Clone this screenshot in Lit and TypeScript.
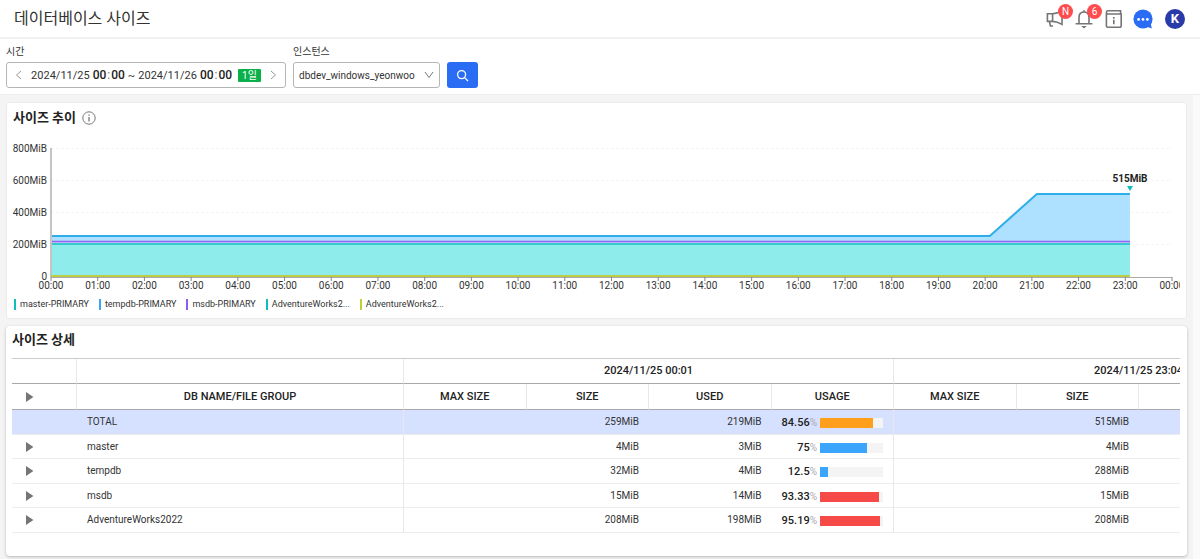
import { LitElement, html, svg, css, nothing } from "lit";
import { customElement, property } from "lit/decorators.js";
import { styleMap } from "lit/directives/style-map.js";
import { classMap } from "lit/directives/class-map.js";

interface Series {
  name: string;
  color: string;
}

interface Row {
  name: string;
  total?: boolean;
  size: string;
  used: string;
  usage: number;
  level: "ok" | "warn" | "critical";
  nextSize: string;
}

const SERIES: Series[] = [
  { name: "master-PRIMARY", color: "#12bdb9" },
  { name: "tempdb-PRIMARY", color: "#3ba5fd" },
  { name: "msdb-PRIMARY", color: "#8c5cf0" },
  { name: "AdventureWorks2...", color: "#12bdb9" },
  { name: "AdventureWorks2...", color: "#bfd034" },
];

const ROWS: Row[] = [
  { name: "TOTAL", total: true, size: "259MiB", used: "219MiB", usage: 84.56, level: "warn", nextSize: "515MiB" },
  { name: "master", size: "4MiB", used: "3MiB", usage: 75, level: "ok", nextSize: "4MiB" },
  { name: "tempdb", size: "32MiB", used: "4MiB", usage: 12.5, level: "ok", nextSize: "288MiB" },
  { name: "msdb", size: "15MiB", used: "14MiB", usage: 93.33, level: "critical", nextSize: "15MiB" },
  { name: "AdventureWorks2022", size: "208MiB", used: "198MiB", usage: 95.19, level: "critical", nextSize: "208MiB" },
];

const base = css`
  * {
    box-sizing: border-box;
  }
  button {
    display: flex;
    align-items: center;
    justify-content: center;
    margin: 0;
    padding: 0;
    border: 0;
    background: none;
    color: inherit;
    font: inherit;
    cursor: pointer;
  }
  svg {
    display: block;
    flex: none;
  }
  h1,
  h2 {
    margin: 0;
  }
`;

@customElement("top-bar")
export class TopBar extends LitElement {
  static styles = [
    base,
    css`
      :host {
        display: flex;
        align-items: center;
        justify-content: space-between;
        height: 39px;
        padding: 0 15px 0 14px;
        border-bottom: 2px solid #f1f1f1;
        background: #fff;
      }
      h1 {
        font-size: 16px;
        font-weight: 400;
        line-height: 36px;
        color: #333;
      }
      .actions {
        display: flex;
        align-items: center;
        gap: 9px;
      }
      .icon {
        position: relative;
        width: 20px;
        height: 20px;
      }
      .account {
        margin-left: 3px;
        border-radius: 50%;
        background: #2a3ba9;
        color: #fff;
        font-size: 13px;
        font-weight: 700;
      }
      .badge {
        position: absolute;
        top: -5px;
        right: -7px;
        width: 15px;
        height: 15px;
        border-radius: 50%;
        background: #ff4d4f;
        color: #fff;
        font-size: 10px;
        line-height: 15px;
        text-align: center;
      }
    `,
  ];

  render() {
    return html`
      <h1>데이터베이스 사이즈</h1>
      <div class="actions">
        <button class="icon" aria-label="공지">
          <svg width="20" height="20" viewBox="0 0 20 20" fill="none" stroke="#757575" stroke-width="1.6">
            <path d="M1.4 4.8h5.2v7.6H1.4zM6.6 4.8C10.4 4.6 13 3.4 16 1.6V15.4C13 13.6 10.4 12.6 6.6 12.4M3.4 12.4l1 4.6h2.6" />
          </svg>
          <span class="badge">N</span>
        </button>
        <button class="icon" aria-label="알림">
          <svg width="20" height="20" viewBox="0 0 20 20" fill="none" stroke="#757575" stroke-width="1.6">
            <path d="M4 14.4V8.6C4 5 6 3 9 3s5 2 5 5.6v5.8M.6 14.8h16.8" />
            <path d="M7.4 2.8 9 .8l1.6 2zM6.2 17h5.6L9 19.4z" fill="#757575" stroke="none" />
          </svg>
          <span class="badge">6</span>
        </button>
        <button class="icon" aria-label="가이드">
          <svg width="20" height="20" viewBox="0 0 20 20" fill="none" stroke="#757575" stroke-width="1.6">
            <path d="M16.6 5V1.8H4A1.6 1.6 0 0 0 4 5h13.2v12a1.2 1.2 0 0 1-1.2 1.2H3.6A1.2 1.2 0 0 1 2.4 17V3.4" />
            <path d="M9.8 8v1.8M9.8 10.8v4.4" />
          </svg>
        </button>
        <button class="icon" aria-label="채팅">
          <svg width="20" height="20" viewBox="0 0 20 20">
            <circle cx="10" cy="10" r="9.6" fill="#2a6df4" />
            <path d="M13 17.5 18.8 19.4 17.4 13z" fill="#2a6df4" />
            <circle cx="5.6" cy="10.4" r="1.4" fill="#fff" />
            <circle cx="10" cy="10.4" r="1.4" fill="#fff" />
            <circle cx="14.4" cy="10.4" r="1.4" fill="#fff" />
          </svg>
        </button>
        <button class="icon account" aria-label="계정">K</button>
      </div>
    `;
  }
}

@customElement("filter-bar")
export class FilterBar extends LitElement {
  static styles = [
    base,
    css`
      :host {
        display: flex;
        align-items: flex-end;
        gap: 7px;
        padding: 5px 6px 6px;
        border-bottom: 1px solid #ededed;
        background: #fff;
        color: #333;
      }
      .field {
        display: flex;
        flex-direction: column;
        gap: 3px;
      }
      .label {
        font-size: 10px;
        line-height: 15px;
      }
      .control {
        display: flex;
        align-items: center;
        height: 26px;
        border: 1px solid #b5b5b5;
        border-radius: 3px;
        background: #fff;
      }
      .range {
        width: 280px;
        justify-content: space-between;
        font-size: 11px;
      }
      .step {
        width: 24px;
        height: 24px;
      }
      .period {
        gap: 3px;
        white-space: nowrap;
      }
      .time {
        font-size: 12px;
        font-weight: 500;
        color: #222;
      }
      .colon {
        margin: 0 1px;
        font-weight: 400;
        color: #777;
      }
      .days {
        margin-left: 3px;
        padding: 0 4px;
        border-radius: 1px;
        background: #0ab04a;
        color: #fff;
        font-size: 10px;
        line-height: 13px;
      }
      .picker {
        display: grid;
        align-items: center;
      }
      .picker > * {
        grid-area: 1 / 1;
      }
      .picker svg {
        justify-self: end;
        margin-right: 6px;
        pointer-events: none;
      }
      select {
        width: 147px;
        margin: 0;
        padding: 0 18px 0 5px;
        appearance: none;
        color: inherit;
        font: inherit;
        font-size: 10px;
      }
      .search {
        width: 31px;
        height: 26px;
        border-radius: 3px;
        background: #2a6df4;
      }
    `,
  ];

  private time() {
    return html`<span class="time">00<span class="colon">:</span>00</span>`;
  }

  render() {
    return html`
      <div class="field" role="group" aria-labelledby="period">
        <span class="label" id="period">시간</span>
        <div class="control range">
          <button class="step" aria-label="이전">
            <svg width="10" height="12" viewBox="0 0 10 12" fill="none" stroke="#999"><path d="M7 2 2.5 6 7 10" /></svg>
          </button>
          <button class="period">
            <span>2024/11/25</span>${this.time()}<span>~</span><span>2024/11/26</span>${this.time()}
            <span class="days">1일</span>
          </button>
          <button class="step" aria-label="다음">
            <svg width="10" height="12" viewBox="0 0 10 12" fill="none" stroke="#999"><path d="M3 2l4.5 4L3 10" /></svg>
          </button>
        </div>
      </div>
      <div class="field">
        <label class="label" for="instance">인스턴스</label>
        <div class="picker">
          <select class="control" id="instance">
            <option>dbdev_windows_yeonwoo</option>
          </select>
          <svg width="10" height="8" viewBox="0 0 10 8" fill="none" stroke="#777"><path d="M1 1l4 5.5L9 1" /></svg>
        </div>
      </div>
      <button class="search" aria-label="조회">
        <svg width="13" height="13" viewBox="0 0 13 13" fill="none" stroke="#fff" stroke-width="1.3">
          <circle cx="5.6" cy="5.6" r="4" />
          <path d="M8.6 8.6 12 12" />
        </svg>
      </button>
    `;
  }
}

@customElement("size-chart")
export class SizeChart extends LitElement {
  @property({ attribute: false }) series: Series[] = [];

  static styles = [
    base,
    css`
      :host {
        display: block;
        overflow: hidden;
        color: #333;
      }
      .chart {
        display: grid;
        grid-template-columns: 34px minmax(0, 1fr);
        column-gap: 4px;
        padding: 16px 8px 8px 0;
        font-size: 10px;
      }
      .values,
      .hours {
        display: flex;
        justify-content: space-between;
      }
      .values {
        flex-direction: column;
        align-items: flex-end;
        height: 128px;
      }
      .values span,
      .hours span {
        display: flex;
        align-items: center;
        justify-content: center;
      }
      .values span {
        height: 0;
      }
      .hours {
        grid-column: 2;
        height: 9px;
      }
      .hours span {
        width: 0;
      }
      .plot {
        position: relative;
      }
      .plot svg {
        width: 100%;
        height: 133px;
        overflow: visible;
      }
      .peak {
        position: absolute;
        top: 25px;
        left: 96.25%;
        display: flex;
        flex-direction: column;
        align-items: center;
        gap: 1px;
        width: 0;
        font-weight: 700;
        line-height: 12px;
        color: #222;
      }
      .peak .marker {
        width: 6px;
        height: 5px;
      }
      .legend {
        display: flex;
        gap: 10px;
        margin: 0;
        padding: 0 1px 8px;
        list-style: none;
        font-size: 9px;
        line-height: 12px;
      }
      .legend li {
        display: flex;
        align-items: center;
        gap: 4px;
      }
      .swatch {
        width: 2px;
        height: 11px;
      }
    `,
  ];

  render() {
    const hours = Array.from({ length: 25 }, (_, i) => `${String(i % 24).padStart(2, "0")}:00`);
    const line = (points: string, color: string, width = 1.5) =>
      svg`<polyline points=${points} fill="none" stroke=${color} stroke-width=${width} vector-effect="non-scaling-stroke" />`;
    return html`
      <div class="chart">
        <div class="values">
          ${["800MiB", "600MiB", "400MiB", "200MiB", "0"].map((v) => html`<span>${v}</span>`)}
        </div>
        <div class="plot">
          <svg viewBox="0 0 1120 133" preserveAspectRatio="none" role="img" aria-label="사이즈 추이">
            ${[0.5, 32.5, 64.5, 96.5].map(
              (y) => svg`<path d=${`M0 ${y}H1120`} stroke="#f5f5f5" stroke-dasharray="3 2" vector-effect="non-scaling-stroke" />`
            )}
            <polygon points="0,88 938,88 985,46 1078,46 1078,93 0,93" fill="#ade1ff" />
            <polygon points="0,93 1078,93 1078,96 0,96" fill="#d3c4fb" />
            <polygon points="0,95 1078,95 1078,129 0,129" fill="#8eedeb" />
            ${line("0,88 938,88 985,46 1078,46", "#30aeea", 2)}
            ${line("0,93.5 1078,93.5", "#8f66f5")}
            ${line("0,96 1078,96", "#16bcc0")}
            <path d="M0 0V129" stroke="#c4c4c4" stroke-width="2" vector-effect="non-scaling-stroke" />
            <path d="M0 129.5H1120" stroke="#aaa" vector-effect="non-scaling-stroke" />
            ${line("0,128 1078,128", "#bccd45", 2)}
            ${hours.map(
              (_, i) => svg`<path d=${`M${(i * 1120) / 24} 129V133`} stroke="#888" vector-effect="non-scaling-stroke" />`
            )}
          </svg>
          <div class="peak">
            <span>515MiB</span>
            <svg class="marker" viewBox="0 0 6 5"><path d="M0 0h6L3 5z" fill="#12bdb9" /></svg>
          </div>
        </div>
        <div class="hours">${hours.map((h) => html`<span>${h}</span>`)}</div>
      </div>
      <ul class="legend">
        ${this.series.map(
          (s) => html`<li><span class="swatch" style=${styleMap({ background: s.color })}></span>${s.name}</li>`
        )}
      </ul>
    `;
  }
}

@customElement("size-table")
export class SizeTable extends LitElement {
  @property({ attribute: false }) rows: Row[] = [];

  static styles = [
    base,
    css`
      :host {
        display: block;
        overflow: hidden;
        color: #333;
      }
      table {
        width: 1372px;
        table-layout: fixed;
        border-spacing: 0;
        border-top: 1px solid #ccc;
        font-size: 10px;
      }
      .col-toggle {
        width: 65px;
      }
      .col-name {
        width: 327px;
      }
      th,
      td {
        padding: 0 10px;
        text-align: right;
        font-weight: 400;
        line-height: 12px;
      }
      thead th {
        height: 26px;
        border-right: 1px solid #e8e8e8;
        border-bottom: 1px solid #a8a8a8;
        text-align: center;
        font-size: 11px;
        font-weight: 500;
        color: #222;
      }
      thead tr:first-child th {
        height: 25px;
      }
      tbody td,
      tbody th {
        height: 25px;
        border-bottom: 1px solid #ebebeb;
      }
      tbody tr:nth-child(even) > * {
        height: 24px;
      }
      .total > * {
        background: #d6e1ff;
      }
      tbody .name {
        text-align: left;
      }
      .edge {
        border-right: 1px solid #e8e8e8;
      }
      .toggle {
        width: 10px;
        height: 12px;
        margin-left: 3px;
      }
      .usage {
        display: flex;
        align-items: center;
        justify-content: flex-end;
        gap: 3px;
        padding-top: 2px;
      }
      .percent {
        font-size: 11px;
        font-weight: 500;
        color: #222;
      }
      .unit {
        font-size: 10px;
        font-weight: 400;
        color: #aaa;
      }
      .meter {
        width: 63px;
        height: 10px;
        background: #f4f4f4;
      }
      .fill {
        height: 100%;
      }
      .ok {
        background: #3ba5fd;
      }
      .warn {
        background: #ff9f1c;
      }
      .critical {
        background: #f64a48;
      }
    `,
  ];

  private toggle(label: string) {
    return html`<button class="toggle" aria-label=${label}>
      <svg width="8" height="10" viewBox="0 0 8 10"><path d="M0 0l7.4 5L0 10z" fill="#757575" /></svg>
    </button>`;
  }

  render() {
    return html`
      <table>
        <colgroup>
          <col class="col-toggle" />
          <col class="col-name" />
          <col span="8" />
        </colgroup>
        <thead>
          <tr>
            <th></th>
            <th></th>
            <th colspan="4">2024/11/25 00:01</th>
            <th colspan="4">2024/11/25 23:04</th>
          </tr>
          <tr>
            <th>${this.toggle("모두 펼치기")}</th>
            <th>DB NAME/FILE GROUP</th>
            ${[0, 1].map(() => ["MAX SIZE", "SIZE", "USED", "USAGE"].map((c) => html`<th>${c}</th>`))}
          </tr>
        </thead>
        <tbody>
          ${this.rows.map(
            (r) => html`<tr class=${classMap({ total: !!r.total })}>
              <td>${r.total ? nothing : this.toggle(`${r.name} 펼치기`)}</td>
              <th class="name edge" scope="row">${r.name}</th>
              <td></td>
              <td>${r.size}</td>
              <td>${r.used}</td>
              <td class="edge">
                <div class="usage">
                  <span class="percent">${r.usage}<span class="unit">%</span></span>
                  <div class="meter">
                    <div class="fill ${r.level}" style=${styleMap({ width: `${r.usage}%` })}></div>
                  </div>
                </div>
              </td>
              <td></td>
              <td>${r.nextSize}</td>
              <td></td>
              <td></td>
            </tr>`
          )}
        </tbody>
      </table>
    `;
  }
}

@customElement("app-root")
export class AppRoot extends LitElement {
  static styles = [
    base,
    css`
      :host {
        display: flex;
        flex-direction: column;
        min-height: 100vh;
        background: #f4f4f4;
        font-family: Roboto, "Noto Sans CJK KR", sans-serif;
      }
      main {
        display: flex;
        flex: 1;
        flex-direction: column;
        gap: 7px;
        padding: 7px 6px 3px;
        border-right: 7px solid #fafafa;
      }
      .card {
        padding: 0 6px;
        border: 1px solid #ececec;
        border-radius: 3px;
        background: #fff;
      }
      .detail {
        flex: 1;
        padding-right: 7px;
        border: 0;
        border-radius: 4px;
        box-shadow: 0 1px 3px rgba(0, 0, 0, 0.25);
      }
      .heading {
        display: flex;
        align-items: center;
        gap: 6px;
        height: 29px;
      }
      .detail .heading {
        height: 32px;
        padding-bottom: 4px;
      }
      h2 {
        font-size: 13px;
        line-height: 20px;
        color: #222;
      }
    `,
  ];

  render() {
    return html`
      <top-bar></top-bar>
      <filter-bar></filter-bar>
      <main>
        <section class="card">
          <div class="heading">
            <h2>사이즈 추이</h2>
            <button aria-label="도움말">
              <svg width="14" height="14" viewBox="0 0 14 14" fill="none" stroke="#777">
                <circle cx="7" cy="7" r="6.2" />
                <path d="M7 3.4v1.4M7 6v4.6" stroke-width="1.3" />
              </svg>
            </button>
          </div>
          <size-chart .series=${SERIES}></size-chart>
        </section>
        <section class="card detail">
          <div class="heading"><h2>사이즈 상세</h2></div>
          <size-table .rows=${ROWS}></size-table>
        </section>
      </main>
    `;
  }
}
